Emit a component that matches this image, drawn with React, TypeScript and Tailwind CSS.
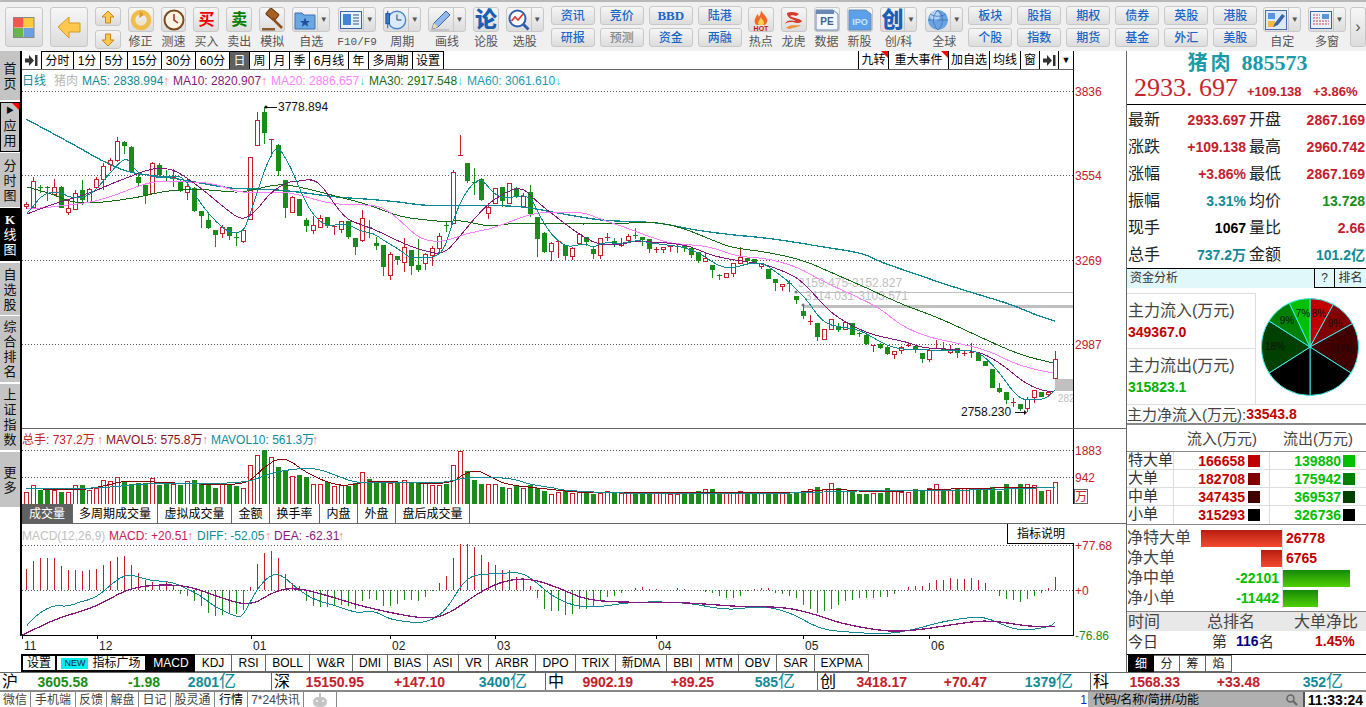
import { type FC, type ReactNode } from "react";

type Pt = number[];

const RED = "#c4202c";
const GREEN = "#1a8c1a";
const TEAL = "#128a96";
const PURPLE = "#86187e";
const PINK = "#ff80ff";
const DKGREEN = "#146c14";

// bodyTop, bodyBottom, wickTop, wickBottom, red(1)/green(0)
const candles: number[][] = [
  [204, 206, 202, 209, 1], [181, 207, 177, 209, 1], [187, 188, 185, 193, 0], [187, 188, 186, 201, 0], [187, 194, 179, 196, 1], [187, 208, 186, 208, 0],
  [208, 212, 199, 215, 1], [193, 209, 190, 209, 1], [190, 200, 180, 205, 0], [189, 202, 188, 203, 1], [179, 187, 177, 189, 1], [166, 179, 163, 190, 1],
  [160, 164, 158, 171, 1], [141, 160, 137, 162, 1], [142, 146, 141, 154, 0], [147, 172, 146, 172, 0], [177, 183, 173, 186, 0], [185, 195, 184, 204, 0],
  [163, 193, 162, 193, 1], [165, 175, 163, 178, 0], [176, 177, 170, 181, 0], [177, 178, 169, 187, 1], [181, 191, 179, 192, 0], [186, 192, 178, 200, 1],
  [188, 211, 187, 212, 0], [211, 216, 211, 228, 0], [220, 228, 213, 229, 0], [230, 235, 230, 247, 0], [227, 233, 225, 238, 1], [227, 236, 227, 240, 0],
  [237, 238, 233, 246, 0], [230, 241, 230, 243, 1], [157, 219, 157, 219, 1], [120, 145, 112, 145, 1], [112, 133, 107, 144, 0], [139, 140, 139, 157, 1],
  [145, 171, 144, 176, 0], [180, 208, 180, 218, 0], [197, 212, 196, 213, 1], [199, 216, 199, 216, 0], [220, 226, 218, 232, 0], [225, 230, 216, 234, 1],
  [218, 227, 215, 227, 1], [217, 226, 217, 228, 0], [226, 227, 226, 235, 1], [221, 229, 221, 233, 1], [221, 237, 221, 239, 0], [238, 247, 238, 255, 0],
  [218, 240, 210, 242, 1], [227, 228, 220, 238, 0], [243, 246, 237, 250, 0], [245, 267, 245, 276, 0], [254, 275, 252, 280, 1], [256, 260, 256, 265, 0],
  [247, 262, 238, 272, 1], [250, 266, 250, 275, 0], [265, 270, 239, 272, 0], [254, 263, 253, 270, 1], [248, 255, 246, 266, 1], [236, 248, 233, 252, 1],
  [225, 226, 222, 232, 0], [172, 223, 170, 223, 1], [155, 156, 135, 156, 1], [163, 181, 163, 183, 0], [182, 183, 168, 195, 0], [179, 200, 178, 201, 0],
  [207, 213, 203, 219, 1], [188, 203, 188, 203, 1], [187, 201, 187, 207, 0], [183, 203, 183, 203, 1], [188, 197, 187, 198, 0], [196, 206, 193, 207, 1],
  [192, 214, 185, 217, 0], [217, 239, 217, 257, 0], [233, 252, 232, 253, 0], [243, 251, 242, 261, 1], [241, 242, 241, 258, 1], [245, 256, 245, 261, 0],
  [248, 256, 247, 260, 1], [234, 243, 233, 244, 1], [237, 242, 237, 246, 0], [249, 254, 247, 259, 0], [238, 255, 238, 259, 1], [237, 238, 233, 241, 1],
  [241, 243, 238, 247, 0], [243, 245, 238, 247, 1], [236, 240, 234, 241, 1], [235, 236, 228, 239, 0], [237, 240, 237, 246, 0], [239, 249, 239, 253, 0],
  [249, 250, 247, 253, 1], [247, 249, 247, 253, 1], [246, 247, 245, 252, 1], [246, 247, 245, 253, 1], [246, 248, 245, 252, 0], [248, 255, 248, 258, 0],
  [252, 261, 252, 263, 0], [258, 261, 253, 262, 1], [265, 270, 265, 278, 0], [275, 276, 274, 280, 0], [273, 277, 273, 277, 1], [263, 273, 263, 277, 1],
  [257, 263, 247, 264, 1], [258, 261, 258, 264, 0], [259, 263, 259, 264, 0], [263, 266, 263, 269, 1], [269, 279, 269, 279, 0], [279, 283, 279, 291, 0],
  [284, 286, 284, 291, 1], [283, 284, 280, 292, 0], [296, 300, 296, 304, 0], [311, 316, 305, 319, 0], [321, 322, 315, 325, 1], [323, 337, 323, 341, 0],
  [329, 339, 329, 339, 1], [319, 329, 319, 329, 1], [327, 330, 323, 332, 0], [322, 329, 322, 329, 1], [323, 335, 323, 335, 0], [333, 334, 332, 337, 0],
  [335, 344, 335, 345, 0], [345, 346, 345, 352, 1], [344, 348, 343, 349, 0], [347, 354, 346, 355, 0], [351, 354, 351, 359, 1], [347, 350, 346, 354, 1],
  [345, 346, 343, 347, 1], [346, 349, 345, 353, 0], [353, 359, 353, 363, 0], [350, 359, 350, 362, 1], [348, 349, 340, 349, 1], [348, 350, 342, 351, 0],
  [349, 352, 345, 354, 1], [348, 353, 348, 358, 0], [353, 354, 350, 356, 1], [352, 353, 343, 358, 1], [353, 361, 353, 361, 0], [361, 366, 361, 366, 0],
  [369, 388, 369, 388, 0], [388, 392, 383, 393, 0], [392, 400, 392, 404, 0], [402, 403, 398, 407, 1], [404, 409, 404, 411, 0], [399, 408, 397, 412, 1],
  [390, 397, 390, 403, 1], [392, 397, 392, 397, 0], [392, 394, 392, 397, 1], [359, 378, 351, 378, 1],
];

const vols = [
  12.5, 20, 15, 17, 15, 13, 13, 20, 20, 15, 17, 26, 25, 29, 25, 22, 23, 23, 28, 20, 22, 22, 20, 25, 26, 21, 23, 17, 21, 20, 19, 17, 42, 53, 58, 51, 40, 36, 30, 31,
  29, 22, 21, 24, 19, 20, 19, 23, 34, 27, 24, 23, 23, 24, 26, 23, 23, 23, 20, 20, 21, 42, 57, 35, 26, 21, 21, 21, 18, 17, 19, 17, 20, 17, 14, 11, 13,
  14, 12, 13, 12, 11, 12, 14, 12, 12, 12, 13, 12, 11, 12, 13, 11, 11, 13, 12, 14, 16, 16, 13, 12, 12, 14.5, 13, 12, 12, 12, 12, 12, 11, 13, 14, 16, 18.5, 16, 22.5, 17,
  14.5, 14, 11, 11, 12, 12, 17, 14, 13, 13, 16, 14.5, 17, 21.5, 16, 15, 16, 17, 17, 16, 16, 18, 14, 21, 18, 21, 21.5, 20, 14.5, 15, 23.5,
];

const hist = [
  23, 31, 34, 34, 34, 26, 22, 22, 20, 22, 23, 27, 31, 35, 37, 27, 18, 11, 9, 6, 9, 5, -4, -6, -12, -17, -25, -28, -27, -26, -26, -22, 3, 28, 40, 42, 34, 17, 8, 4,
  -12, -17, -18, -18, -16, -16, -17, -20, -12, -10, -11, -17, -17, -15, -11, -11, -12, -7, -1, 8, 15, 34, 49, 49, 46, 38, 30, 27, 21, 21, 14, 13, 4, -9, -20, -23, -23,
  -27, -26, -20, -20, -17, -11, -7, -6, -3, -1, 2, 3, 1, 1, 0, 0, 2, 1, 0, 0, -2, -3, -6, -9, -9, -6, -1, 1, 2, 2, -3, -4, -6, -9, -16, -20, -25, -23, -20, -16,
  -12, -11, -9, -9, -9, -8, -7, -4, 0, 3, 4, 4, 7, 11, 11, 13, 12, 12, 13, 11, 8, 0, -6, -10, -11, -13, -10, -6, -3, 2, 14,
];

const ma5: Pt[] = [[27,213],[33,207],[40,197],[50,192],[63,193],[68,197],[80,198],[90,195],[100,185],[110,173],[120,162],[128,158],[137,173],[147,175],[160,178],[173,176],[182,177],[190,187],[203,207],[217,223],[230,233],[243,232],[248,220],[257,193],[267,163],[277,145],[287,160],[295,177],[303,197],[313,215],[327,227],[343,223],[353,227],[363,232],[373,233],[383,240],[400,250],[410,258],[427,258],[437,256],[445,248],[453,220],[463,197],[473,183],[482,179],[493,193],[503,198],[513,197],[530,195],[540,217],[553,237],[567,247],[577,245],[587,244],[593,248],[603,242],[620,244],[637,240],[650,243],[667,245],[683,247],[697,252],[707,258],[717,265],[727,268],[737,267],[750,263],[763,263],[773,270],[787,280],[797,290],[807,300],[823,323],[840,327],[860,330],[877,340],[893,348],[913,350],[947,350],[973,350],[985,357],[1000,373],[1013,392],[1023,400],[1037,400],[1047,398],[1055,390]];
const ma10: Pt[] = [[27,214],[50,205],[77,197],[93,192],[113,183],[137,174],[153,168],[173,169],[190,180],[207,193],[227,210],[243,221],[257,210],[270,193],[287,182],[300,181],[313,179],[323,187],[333,202],[347,220],[363,225],[380,232],[400,242],[420,250],[443,255],[457,240],[473,220],[490,202],[510,190],[523,188],[533,198],[547,210],[567,225],[583,237],[600,245],[620,245],[633,241],[650,242],[670,243],[690,246],[710,255],[733,260],[757,263],[773,267],[797,277],[813,293],[830,312],[847,323],[867,333],[887,338],[907,342],[923,348],[947,349],[973,351],[987,355],[1007,368],[1023,382],[1040,390],[1053,392]];
const ma20: Pt[] = [[27,209],[43,208],[67,205],[87,203],[107,198],[123,192],[147,183],[163,181],[187,182],[213,183],[240,193],[267,192],[287,192],[307,197],[327,203],[350,205],[380,205],[400,220],[417,237],[433,242],[450,240],[467,233],[487,230],[507,223],[530,214],[550,212],[583,212],[600,219],[627,228],[653,238],[673,244],[710,246],[737,257],[767,258],[800,268],[820,280],[853,295],[880,308],[900,325],[927,337],[957,343],[987,350],[1013,363],[1037,370],[1053,373]];
const ma30: Pt[] = [[27,187],[50,193],[73,203],[97,203],[120,200],[140,197],[160,192],[187,189],[213,190],[240,193],[260,188],[280,184],[300,187],[320,192],[343,198],[370,205],[400,217],[427,220],[447,222],[460,220],[490,227],[513,223],[540,223],[567,224],[600,224],[630,223],[657,222],[683,228],[717,242],[733,248],[767,252],[803,260],[830,272],[867,288],[903,305],[937,317],[980,337],[1020,355],[1053,363]];
const ma60: Pt[] = [[26,119],[50,132],[80,148],[100,160],[127,172],[147,175],[173,178],[200,183],[233,189],[267,189],[300,192],[333,197],[367,199],[400,202],[427,206],[467,205],[520,206],[547,211],[580,217],[607,221],[657,222],[693,230],[733,235],[767,238],[800,243],[823,247],[863,253],[880,262],[913,273],[947,285],[980,295],[1013,305],[1033,314],[1055,321]];

// low pane curves, read off the crops: left half and right half have different x scale
const z11 = (pts: Pt[]): Pt[] => pts.map(([x, y]) => [x / 2.8, y / 3 + 425]);
const z12 = (pts: Pt[]): Pt[] => pts.map(([x, y]) => [x / 2.75 + 560, y / 3 + 425]);

const mavol5 = [
  ...z11([[73,190],[140,193],[220,195],[270,188],[320,175],[360,167],[500,175],[650,180],[700,170],[740,125],[780,100],[810,105],[860,145],[930,178],[980,182],[1020,170],[1100,170],[1130,172],[1260,178],[1300,145],[1340,135],[1380,160],[1420,180],[1560,195]]),
  ...z12([[0,197],[100,205],[400,200],[650,205],[750,190],[860,203],[1100,190],[1280,188],[1362,187]]),
];
const mavol10 = [
  ...z11([[73,190],[260,193],[420,173],[680,177],[750,148],[800,135],[880,127],[950,155],[1000,175],[1100,172],[1240,175],[1300,157],[1430,158],[1480,178],[1560,190]]),
  ...z12([[0,195],[150,205],[400,205],[650,205],[800,197],[1100,197],[1362,187]]),
];
const diff = [
  ...z11([[75,602],[100,570],[150,540],[190,545],[220,532],[270,518],[320,470],[350,450],[380,452],[420,467],[480,470],[520,490],[560,510],[600,545],[660,575],[680,575],[720,490],[760,447],[790,450],[830,490],[880,525],[950,545],[1000,565],[1030,558],[1060,563],[1090,583],[1170,595],[1210,585],[1250,555],[1300,465],[1340,447],[1400,447],[1450,440],[1490,460],[1530,500],[1568,525]]),
  ...z12([[40,543],[90,547],[130,542],[210,530],[350,532],[460,557],[550,542],[630,560],[710,610],[770,620],[900,628],[980,612],[1050,590],[1140,575],[1180,580],[1260,620],[1350,605],[1362,590]]),
];
const dea = [
  ...z11([[60,632],[120,600],[170,577],[270,545],[350,495],[420,480],[520,480],[610,515],[700,545],[770,497],[830,488],[920,512],[1000,540],[1100,565],[1200,583],[1260,565],[1330,510],[1400,470],[1480,458],[1568,490]]),
  ...z12([[60,520],[140,532],[350,532],[480,545],[600,545],[680,560],[770,595],[860,613],[920,620],[1000,613],[1100,595],[1180,585],[1300,606],[1362,604]]),
];

const smooth = (pts: Pt[]) => {
  let d = `M${pts[0][0]} ${pts[0][1]}`;
  for (let i = 1; i < pts.length - 1; i++) {
    const mx = (pts[i][0] + pts[i + 1][0]) / 2;
    const my = (pts[i][1] + pts[i + 1][1]) / 2;
    d += ` Q${pts[i][0]} ${pts[i][1]} ${mx} ${my}`;
  }
  const last = pts[pts.length - 1];
  return `${d} L${last[0]} ${last[1]}`;
};

const Curve: FC<{ pts: Pt[]; color: string; w?: number }> = ({ pts, color, w = 1 }) => (
  <path d={smooth(pts)} fill="none" stroke={color} strokeWidth={w} shapeRendering="crispEdges" />
);

const Dots: FC<{ y: number }> = ({ y }) => (
  <line x1={22} x2={1073} y1={y + 0.5} y2={y + 0.5} stroke="#555" strokeDasharray="1 2" shapeRendering="crispEdges" />
);

const T: FC<{ x: number; y: number; fill: string; size?: number; children: ReactNode }> = ({ x, y, fill, size = 12, children }) => (
  <text x={x} y={y} fill={fill} fontSize={size}>
    {children}
  </text>
);

const MainChart = () => (
  <svg className="block h-[359px] w-[1104px]" viewBox="22 70 1104 359">
    <T x={22} y={85} fill={TEAL}>日线</T>
    <T x={54} y={85} fill="#b8b8b8">猪肉</T>
    <T x={82} y={85} fill={TEAL}>MA5: 2838.994</T>
    <T x={163} y={85} fill="#ff7070">↑</T>
    <T x={173} y={85} fill={PURPLE}>MA10: 2820.907</T>
    <T x={261} y={85} fill="#ff7070">↑</T>
    <T x={271} y={85} fill={PINK}>MA20: 2886.657</T>
    <T x={359} y={85} fill="#30d0f0">↓</T>
    <T x={369} y={85} fill={DKGREEN}>MA30: 2917.548</T>
    <T x={457} y={85} fill="#30d0f0">↓</T>
    <T x={467} y={85} fill="#1a9ab8">MA60: 3061.610</T>
    <T x={555} y={85} fill="#30d0f0">↓</T>
    {[91, 175, 260, 344].map((y) => (
      <Dots key={y} y={y} />
    ))}
    <line x1={796} x2={1073} y1={292.5} y2={292.5} stroke="#c0c0c0" />
    <rect x={803} y={305} width={270} height={3} fill="#c0c0c0" />
    <rect x={1055} y={379} width={18} height={12} fill="#c0c0c0" />
    <T x={798} y={287} fill="#c0c0c0">3159.475-3152.827</T>
    <T x={805} y={300} fill="#c0c0c0">3114.031-3103.571</T>
    <T x={1058} y={402} fill="#c0c0c0" size={10}>282</T>
    <circle cx={796} cy={292} r={1.5} fill="#777" />
    <circle cx={803} cy={305} r={1.5} fill="#777" />
    <g shapeRendering="crispEdges">
      {candles.map(([top, bot, hi, lo, up], i) => {
        const x = 26 + 7 * i;
        const c = up ? RED : GREEN;
        return (
          <g key={i}>
            <line x1={x + 0.5} x2={x + 0.5} y1={hi} y2={lo} stroke={c} />
            {bot - top < 2 ? (
              <rect x={x - 2} y={top} width={5} height={1} fill={c} />
            ) : up ? (
              <rect x={x - 1.5} y={top + 0.5} width={4} height={bot - top} fill="#fff" stroke={c} />
            ) : (
              <rect x={x - 2} y={top} width={5} height={bot - top} fill={c} />
            )}
          </g>
        );
      })}
    </g>
    <Curve pts={ma60} color={TEAL} w={1.3} />
    <Curve pts={ma30} color={DKGREEN} />
    <Curve pts={ma20} color={PINK} />
    <Curve pts={ma10} color={PURPLE} />
    <Curve pts={ma5} color={TEAL} />
    <circle cx={266} cy={107} r={1.5} fill="#111" />
    <line x1={266} x2={277} y1={107.5} y2={107.5} stroke="#111" />
    <T x={278} y={111} fill="#111">3778.894</T>
    <T x={961} y={416} fill="#111">2758.230</T>
    <line x1={1015} x2={1026} y1={412.5} y2={412.5} stroke="#111" />
    <path d="M1024 410 L1027 412.5 L1024 415 Z" fill="#111" />
    <line x1={1073.5} x2={1073.5} y1={70} y2={429} stroke="#000" shapeRendering="crispEdges" />
    <line x1={22} x2={1126} y1={429} y2={429} stroke="#666" strokeWidth={2} shapeRendering="crispEdges" />
    {[["3836", 96], ["3554", 180], ["3269", 265], ["2987", 349]].map(([t, y]) => (
      <T key={t} x={1075} y={Number(y)} fill={RED}>{t}</T>
    ))}
  </svg>
);

const VolumeChart = () => (
  <svg className="block h-[75px] w-[1104px]" viewBox="22 429 1104 75">
    <T x={22} y={444} fill={RED}>总手: 737.2万</T>
    <T x={97} y={444} fill="#ff7070">↑</T>
    <T x={106} y={444} fill="#8b1020">MAVOL5: 575.8万</T>
    <T x={202} y={444} fill="#ff7070">↑</T>
    <T x={211} y={444} fill={TEAL}>MAVOL10: 561.3万</T>
    <T x={312} y={444} fill="#ff7070">↑</T>
    <Dots y={450} />
    <Dots y={477} />
    <g shapeRendering="crispEdges">
      {vols.map((v, i) => {
        const x = 26 + 7 * i;
        const h = Math.round(v * 0.93);
        return candles[i][4] ? (
          <rect key={i} x={x - 1.5} y={504.5 - h} width={4} height={h} fill="#fff" stroke={RED} />
        ) : (
          <rect key={i} x={x - 2} y={504 - h} width={5} height={h} fill={GREEN} />
        );
      })}
    </g>
    <Curve pts={mavol5} color="#8b0000" />
    <Curve pts={mavol10} color={TEAL} />
    <line x1={1073.5} x2={1073.5} y1={429} y2={504} stroke="#000" shapeRendering="crispEdges" />
    <T x={1075} y={455} fill={RED}>1883</T>
    <T x={1075} y={482} fill={RED}>942</T>
    <rect x={1074.5} y={489.5} width={13} height={14} fill="#fff" stroke="#666" />
    <T x={1075} y={501} fill={RED}>万</T>
  </svg>
);

const MacdChart = () => (
  <svg className="block h-[112px] w-[1104px] overflow-visible" viewBox="22 524 1104 112">
    <T x={22} y={540} fill="#c0c0c0">MACD(12,26,9)</T>
    <T x={109} y={540} fill="#c8205a">MACD: +20.51</T>
    <T x={187} y={540} fill="#ff7070">↑</T>
    <T x={197} y={540} fill={TEAL}>DIFF: -52.05</T>
    <T x={265} y={540} fill="#ff7070">↑</T>
    <T x={274} y={540} fill={PURPLE}>DEA: -62.31</T>
    <T x={338} y={540} fill="#ff7070">↑</T>
    <Dots y={545} />
    <Dots y={590} />
    <g shapeRendering="crispEdges">
      {hist.map((v, i) => {
        const x = 26 + 7 * i + 0.5;
        const h = v * 0.93;
        return v === 0 ? null : <line key={i} x1={x} x2={x} y1={590} y2={590 - h} stroke={v > 0 ? RED : GREEN} />;
      })}
    </g>
    <Curve pts={diff} color={TEAL} />
    <Curve pts={dea} color={PURPLE} w={1.3} />
    <line x1={1073.5} x2={1073.5} y1={524} y2={636} stroke="#000" shapeRendering="crispEdges" />
    <line x1={22} x2={1073} y1={635.5} y2={635.5} stroke="#000" shapeRendering="crispEdges" />
    <T x={1075} y={550} fill={RED}>+77.68</T>
    <T x={1075} y={595} fill={RED}>+0</T>
    <T x={1075} y={640} fill={GREEN}>-76.86</T>
  </svg>
);

const Cell: FC<{ w: string; active?: boolean; corner?: boolean; children: ReactNode; tone?: string }> = ({ w, active, corner, children, tone }) => (
  <div
    className={`relative flex h-full items-center justify-center border-r whitespace-nowrap ${tone ?? "border-black"} ${w} ${active ? "bg-[#606060] text-white" : "text-black"}`}
  >
    {children}
    {corner && <div className="absolute top-0 right-0 h-0 w-0 border-t-[7px] border-l-[7px] border-t-[#ff0000] border-l-transparent" />}
  </div>
);

const SkipIcon = () => (
  <svg width="13" height="11" viewBox="0 0 13 11" fill="#333">
    <path d="M0 3.5h4V0l5 5.5-5 5.5V7.5H0z" />
    <rect x="10" y="0" width="2.5" height="11" />
  </svg>
);

const periods = [
  ["分时", "w-[32px]"], ["1分", "w-[27px]"], ["5分", "w-[27px]"], ["15分", "w-[34px]"], ["30分", "w-[34px]"], ["60分", "w-[34px]"],
  ["日", "w-[20px]"], ["周", "w-[20px]"], ["月", "w-[20px]"], ["季", "w-[20px]"], ["6月线", "w-[39px]"], ["年", "w-[20px]"], ["多周期", "w-[44px]"], ["设置", "w-[31px]"],
];

const PeriodTabs = () => (
  <div className="flex h-[19px] w-[1052px] justify-between border-r border-b border-r-black border-b-[#666] text-[12px] leading-none">
    <div className="flex">
      <div className="flex w-[19px] items-center justify-center">
        <SkipIcon />
      </div>
      <div className="flex border-t border-l border-black">
        {periods.map(([label, w]) => (
          <Cell key={label} w={w} active={label === "日"}>{label}</Cell>
        ))}
      </div>
    </div>
    <div className="flex border-l border-black">
      <Cell w="w-[30px]" corner>九转</Cell>
      <Cell w="w-[60px]" corner>重大事件</Cell>
      <Cell w="w-[41px]">加自选</Cell>
      <Cell w="w-[31px]">均线</Cell>
      <Cell w="w-[19px]">窗</Cell>
      <Cell w="w-[19px]"><SkipIcon /></Cell>
      <div className="flex w-[14px] items-center justify-center text-[9px]">▼</div>
    </div>
  </div>
);

const volTabs = [
  ["成交量", "w-[51px]"], ["多周期成交量", "w-[85px]"], ["虚拟成交量", "w-[74px]"], ["金额", "w-[38px]"],
  ["换手率", "w-[50px]"], ["内盘", "w-[38px]"], ["外盘", "w-[38px]"], ["盘后成交量", "w-[74px]"],
];

const VolumeTabs = () => (
  <div className="flex h-[20px] w-[1104px] border-b border-[#666] text-[12px] leading-none">
    {volTabs.map(([label, w]) => (
      <Cell key={label} w={w} tone="border-[#666]" active={label === "成交量"}>{label}</Cell>
    ))}
  </div>
);

const ticks = [
  ["11", "w-[75px]"], ["12", "w-[154px]"], ["01", "w-[139px]"], ["02", "w-[105px]"], ["03", "w-[161px]"], ["04", "w-[147px]"], ["05", "w-[126px]"], ["06", "w-[100px]"],
];

const TimeAxis = () => (
  <div className="flex h-[18px] pl-[2px] text-[12px] leading-none">
    {ticks.map(([label, w]) => (
      <div key={label} className={`h-full ${w}`}>
        <div className="h-[3px] w-px bg-black" />
        <div className="pt-[1px] pl-[2px] text-[#222]">{label}</div>
      </div>
    ))}
  </div>
);

const indicators = [
  ["KDJ", "w-[37px]"], ["RSI", "w-[34px]"], ["BOLL", "w-[44px]"], ["W&R", "w-[43px]"], ["DMI", "w-[35px]"], ["BIAS", "w-[40px]"], ["ASI", "w-[31px]"], ["VR", "w-[30px]"],
  ["ARBR", "w-[47px]"], ["DPO", "w-[40px]"], ["TRIX", "w-[40px]"], ["新DMA", "w-[51px]"], ["BBI", "w-[33px]"], ["MTM", "w-[39px]"], ["OBV", "w-[38px]"], ["SAR", "w-[38px]"], ["EXPMA", "w-[54px]"],
];

const IndicatorTabs = () => (
  <div className="flex h-[18px] pl-px text-[12px] leading-none">
    <div className="flex w-[36px] items-center justify-center border-2 border-black">设置</div>
    <div className="flex w-[90px] items-center justify-center gap-1 border-2 border-l-0 border-black">
      <span className="bg-[#00f0f0] px-[3px] text-[9px] leading-[11px] text-[#223]">NEW</span>
      指标广场
    </div>
    <div className="flex w-[48px] items-center justify-center bg-black text-white">MACD</div>
    <div className="flex border-y border-[#666]">
      {indicators.map(([label, w]) => (
        <Cell key={label} w={w} tone="border-[#666]">{label}</Cell>
      ))}
    </div>
  </div>
);

const navItems = [
  { chars: ["首", "页"], h: "h-[49px]", gap: "mb-[2px]" },
  { chars: ["应", "用"], h: "h-[50px]", gap: "mb-px", app: true },
  { chars: ["分", "时", "图"], h: "h-[54px]", gap: "mb-px" },
  { chars: ["K", "线", "图"], h: "h-[53px]", gap: "mb-[2px]", on: true },
  { chars: ["自", "选", "股"], h: "h-[52px]", gap: "mb-px" },
  { chars: ["综", "合", "排", "名"], h: "h-[66px]", gap: "mb-[2px]" },
  { chars: ["上", "证", "指", "数"], h: "h-[66px]", gap: "mb-[2px]" },
  { chars: ["更", "多"], h: "h-[55px]", gap: "" },
];

const LeftNav = () => (
  <div className="w-[20px] shrink-0 text-[13px] leading-[15px]">
    {navItems.map((n) => (
      <div
        key={n.chars.join("")}
        className={`relative flex flex-col items-center justify-center ${n.h} ${n.gap} ${n.on ? "bg-black text-white" : "bg-[#c4c4c4] text-[#111]"} ${n.app ? "border border-black" : ""}`}
      >
        {n.app && (
          <>
            <div className="absolute top-0 right-0 h-0 w-0 border-t-[7px] border-l-[7px] border-t-[#ff0000] border-l-transparent" />
            <div className="mb-[3px] text-[8px] leading-[9px]">▶</div>
          </>
        )}
        {n.chars.map((c) => (
          <span key={c} className={c === "K" ? "font-bold [font-family:'Liberation_Serif',serif]" : ""}>{c}</span>
        ))}
      </div>
    ))}
  </div>
);

// toolbar drawings
const LogoIcon = () => (
  <svg width="22" height="21" viewBox="0 0 22 21">
    <rect x="0.5" y="0.5" width="10" height="10" fill="#f2564c" />
    <rect x="11" y="0.5" width="10" height="10" fill="#fbc93c" />
    <rect x="0.5" y="11" width="10" height="9.5" fill="#68b548" />
    <rect x="11" y="11" width="10" height="9.5" fill="#6f9ee0" />
    <rect x="0.5" y="0.5" width="20.5" height="20" fill="none" stroke="#888" />
  </svg>
);

const BackIcon = () => (
  <svg width="24" height="24" viewBox="0 0 24 24">
    <path d="M1 12 12 2v6h11v9H12v6z" fill="#fdc84e" stroke="#d69a26" />
  </svg>
);

const VArrow: FC<{ down?: boolean }> = ({ down }) => (
  <svg width="14" height="14" viewBox="0 0 14 14">
    <path d={down ? "M7 13 1 7h3.5V1h5v6H13z" : "M7 1 1 7h3.5v6h5V7H13z"} fill="#fdc84e" stroke="#c8871e" />
  </svg>
);

const RefreshIcon = () => (
  <svg width="22" height="22" viewBox="0 0 22 22">
    <circle cx="11" cy="11" r="8" fill="none" stroke="#f0bc4c" strokeWidth="4.5" />
    <path d="M10 2 14 6 9 9z" fill="#d99a2c" />
    <path d="M7 12a4 4 0 0 0 7 1" fill="none" stroke="#fbe6a6" strokeWidth="1.5" />
  </svg>
);

const ClockIcon = () => (
  <svg width="22" height="22" viewBox="0 0 22 22">
    <circle cx="11" cy="11" r="9.5" fill="#fbf4e0" stroke="#7c4a20" strokeWidth="2" />
    <path d="M11 5v6l4 3" fill="none" stroke="#a02c20" strokeWidth="1.5" />
  </svg>
);

const HammerIcon = () => (
  <svg width="24" height="24" viewBox="0 0 24 24">
    <rect x="7" y="2" width="11" height="8" rx="1" transform="rotate(40 12 6)" fill="#a85f22" stroke="#6d3a12" />
    <path d="M12 10 22 20" stroke="#8c4c1c" strokeWidth="2.5" />
    <rect x="2" y="20" width="13" height="2.5" fill="#8c5a2c" />
  </svg>
);

const FolderIcon = () => (
  <svg width="22" height="20" viewBox="0 0 22 20">
    <path d="M1 3h7l2 2h11v14H1z" fill="#6aa8e4" stroke="#3e72b4" />
    <path d="M11 7.5 12.4 11H16l-2.8 2.2 1 3.5L11 14.6l-3.2 2.1 1-3.5L6 11h3.6z" fill="#1f4f9c" />
  </svg>
);

const InfoIcon = () => (
  <svg width="22" height="18" viewBox="0 0 22 18">
    <rect x="0.5" y="0.5" width="21" height="17" fill="#e8f0fb" stroke="#3a66a8" />
    <rect x="3" y="3" width="8" height="11" fill="#3f84d8" />
    <path d="M13 4h6M13 7h6M13 10h6M13 13h6" stroke="#35598c" />
  </svg>
);

const PeriodIcon = () => (
  <svg width="26" height="22" viewBox="0 0 26 22">
    <circle cx="14" cy="11" r="9.5" fill="#dbeafa" stroke="#4a86cc" strokeWidth="1.5" />
    <path d="M14 5v6h5" fill="none" stroke="#333" />
    <rect x="2" y="4" width="4" height="11" fill="#3a78c8" stroke="#1f4f9c" />
    <path d="M4 1v3M4 15v5" stroke="#1f4f9c" />
  </svg>
);

const PencilIcon = () => (
  <svg width="22" height="22" viewBox="0 0 22 22">
    <path d="M2 20 4 14 16 2l4 4L8 18z" fill="#8fb8ec" stroke="#3a66a8" />
    <path d="M2 20 4 14l4 4z" fill="#f4d9a8" />
    <path d="M1 21h18" stroke="#bbb" strokeWidth="1.5" />
  </svg>
);

const SearchChartIcon = () => (
  <svg width="22" height="22" viewBox="0 0 22 22">
    <circle cx="9.5" cy="9.5" r="8" fill="#fff" stroke="#2d5fae" strokeWidth="2" />
    <path d="M3.5 12 7 8l3 3 5-6" fill="none" stroke="#e0342c" strokeWidth="1.6" />
    <path d="M15 15l5.5 5.5" stroke="#2d5fae" strokeWidth="3" />
  </svg>
);

const FireIcon = () => (
  <svg width="20" height="22" viewBox="0 0 20 22">
    <path d="M10 1c1 4 5 5 6 9 1 3-1 5-2 6H6c-2-1-3-3-2-6 .5-2 2-3 2-5 1 1 2 2 2 3 1-2 2-4 2-7z" fill="#f0682c" />
    <path d="M10 8c0 2 3 3 3 6 0 1-1 2-1 2H8s-1-1-1-2c0-2 2-3 3-6z" fill="#fbd04c" />
    <text x="10" y="21.5" textAnchor="middle" fontSize="7" fontWeight="700" fill="#cc1010">HOT</text>
  </svg>
);

const DragonIcon = () => (
  <svg width="22" height="22" viewBox="0 0 22 22" fill="none">
    <path d="M4 4c4-2 9-1 12 1l-3 2c-2-1-5-1-6 0 3 2 9 2 12 5-2 3-6 2-9 1-3 0-6 0-8 2 2-5 7-3 11-3-4-2-9-3-9-8z" fill="#d63a2a" />
    <path d="M3 19c4-4 10-2 15-3-3 3-9 2-11 4z" fill="#f09030" />
  </svg>
);

const DocIcon: FC<{ label: string; dark?: boolean }> = ({ label, dark }) => (
  <svg width="24" height="22" viewBox="0 0 24 22">
    <path d="M1 1h17l5 4v16H1z" fill={dark ? "#5aa0ea" : "#f4f8fd"} stroke="#6a8ab4" />
    {!dark && <rect x="1" y="1" width="18" height="4" fill="#6a8ab4" />}
    <text x="12" y="16" textAnchor="middle" fontSize={dark ? 9 : 10} fontWeight="700" fill={dark ? "#cfe4ff" : "#44608c"}>{label}</text>
  </svg>
);

const GlobeIcon = () => (
  <svg width="22" height="22" viewBox="0 0 22 22" fill="none">
    <circle cx="11" cy="11" r="10" fill="#6aa2e2" />
    <circle cx="8" cy="7" r="5" fill="#b4d2f4" />
    <path d="M1 11h20M11 1c-6 5-6 15 0 20M11 1c6 5 6 15 0 20M3 5c5 3 11 3 16 0" stroke="#3f74bc" strokeWidth=".8" />
  </svg>
);

const CustomIcon = () => (
  <svg width="22" height="20" viewBox="0 0 22 20">
    <rect x="0.5" y="0.5" width="21" height="19" fill="#dbe8f8" stroke="#4a6ea8" />
    <rect x="3" y="3" width="7" height="6" fill="#5a94dc" />
    <rect x="3" y="11" width="7" height="6" fill="#f2b84c" />
    <path d="M8 17 10 13 17 4l3 2-7 9z" fill="#3a66a8" />
  </svg>
);

const WindowsIcon = () => (
  <svg width="22" height="18" viewBox="0 0 22 18">
    <rect x="0.5" y="0.5" width="21" height="17" fill="#e8f0fb" stroke="#3a66a8" />
    <path d="M3 4h7M3 7h7M3 10h16M3 13h16" stroke="#d04040" strokeDasharray="2 1" />
    <rect x="12" y="3" width="7" height="5" fill="#5a94dc" />
  </svg>
);

const BigGlyph: FC<{ children: ReactNode }> = ({ children }) => <span className="text-[22px] leading-none font-black text-[#1a5fb4]">{children}</span>;

const btnFace = "rounded-[3px] border border-[#c8c8c8] bg-gradient-to-b from-[#f6f6f6] to-[#dcdcdc]";

const Tool: FC<{ label: string; icon: ReactNode; split?: boolean; className?: string; labelClass?: string }> = ({ label, icon, split, className, labelClass }) => (
  <div className={`flex flex-col items-center ${split ? "w-[38px]" : "w-[26px]"} ${className ?? ""}`}>
    <div className={`mt-[7px] flex h-[25px] w-full items-center ${btnFace}`}>
      <div className="flex h-full min-w-0 flex-1 items-center justify-center overflow-hidden">{icon}</div>
      {split && <div className="flex h-full w-[12px] items-center justify-center border-l border-[#c8c8c8] text-[8px] text-[#555]">▼</div>}
    </div>
    <div className={`mt-[2px] leading-[16px] whitespace-nowrap text-[#555] ${labelClass ?? "text-[12px]"}`}>{label}</div>
  </div>
);

const TextBtn: FC<{ top: string; bottom: string; mutedBottom?: boolean }> = ({ top, bottom, mutedBottom }) => (
  <div className="mt-[6px] flex w-[44px] flex-col gap-[3px] text-[12px] leading-none font-medium text-[#1a66c8]">
    <div className={`flex h-[19px] items-center justify-center ${btnFace} ${top === "BBD" ? "text-[13px] font-bold [font-family:'Liberation_Serif',serif]" : ""}`}>{top}</div>
    <div className={`flex h-[19px] items-center justify-center ${btnFace} ${mutedBottom ? "text-[#888]" : ""}`}>{bottom}</div>
  </div>
);

const Toolbar = () => (
  <div className="flex h-[51px] shrink-0 items-start gap-[7px] border-t-2 border-[#b8b8b8] bg-[#f0f0f0] pl-[5px] [&>*]:-translate-y-[2px]">
    <div className={`mt-[7px] flex h-[40px] w-[38px] items-center justify-center ${btnFace}`}><LogoIcon /></div>
    <div className={`mt-[7px] flex h-[40px] w-[38px] items-center justify-center ${btnFace}`}><BackIcon /></div>
    <div className="mt-[7px] flex w-[26px] flex-col gap-[4px]">
      <div className={`flex h-[19px] items-center justify-center ${btnFace}`}><VArrow /></div>
      <div className={`flex h-[19px] items-center justify-center ${btnFace}`}><VArrow down /></div>
    </div>
    <Tool label="修正" icon={<RefreshIcon />} />
    <Tool label="测速" icon={<ClockIcon />} />
    <Tool label="买入" icon={<span className="text-[16px] leading-none font-bold text-[#f00000]">买</span>} />
    <Tool label="卖出" icon={<span className="text-[16px] leading-none font-bold text-[#008000]">卖</span>} />
    <Tool label="模拟" icon={<HammerIcon />} />
    <Tool label="自选" split icon={<FolderIcon />} />
    <Tool label="F10/F9" split icon={<InfoIcon />} className="ml-px" labelClass="text-[11px] [font-family:'Liberation_Mono',monospace]" />
    <Tool label="周期" split icon={<PeriodIcon />} />
    <Tool label="画线" split icon={<PencilIcon />} />
    <Tool label="论股" icon={<BigGlyph>论</BigGlyph>} />
    <Tool label="选股" split icon={<SearchChartIcon />} />
    <div className="flex gap-[5px]">
      <TextBtn top="资讯" bottom="研报" />
      <TextBtn top="竞价" bottom="预测" mutedBottom />
      <TextBtn top="BBD" bottom="资金" />
      <TextBtn top="陆港" bottom="两融" />
    </div>
    <Tool label="热点" icon={<FireIcon />} className="-ml-px" />
    <Tool label="龙虎" icon={<DragonIcon />} />
    <Tool label="数据" icon={<DocIcon label="PE" />} />
    <Tool label="新股" icon={<DocIcon label="IPO" dark />} />
    <Tool label="创/科" split icon={<BigGlyph>创</BigGlyph>} />
    <Tool label="全球" split icon={<GlobeIcon />} className="ml-px" />
    <div className="-ml-[2px] flex gap-[5px]">
      <TextBtn top="板块" bottom="个股" />
      <TextBtn top="股指" bottom="指数" />
      <TextBtn top="期权" bottom="期货" />
      <TextBtn top="债券" bottom="基金" />
      <TextBtn top="英股" bottom="外汇" />
      <TextBtn top="港股" bottom="美股" />
    </div>
    <Tool label="自定" split icon={<CustomIcon />} className="-ml-px" />
    <Tool label="多窗" split icon={<WindowsIcon />} />
    <div className={`-ml-[3px] mt-[7px] flex h-[40px] w-[16px] items-center justify-center text-[16px] text-[#555] ${btnFace}`}>›</div>
  </div>
);

const quote = [
  ["最新", "2933.697", RED, "开盘", "2867.169", RED],
  ["涨跌", "+109.138", RED, "最高", "2960.742", RED],
  ["涨幅", "+3.86%", RED, "最低", "2867.169", RED],
  ["振幅", "3.31%", TEAL, "均价", "13.728", GREEN],
  ["现手", "1067", "#000", "量比", "2.66", RED],
  ["总手", "737.2万", TEAL, "金额", "101.2亿", TEAL],
];

const slices = [
  [8, "#c00000", "8%", 63, 25], [9, "#800000", "9%", 79, 35], [17, "#400000", "17%", 88, 61], [16, "#000000", "", 0, 0],
  [16, "#000000", "", 0, 0], [18, "#004000", "18%", 19, 58], [9, "#008000", "9%", 31, 32], [7, "#00c000", "7%", 47, 25],
] as const;

const Pie = () => {
  const cx = 54;
  const cy = 59;
  const r = 48.5;
  let acc = 0;
  return (
    <svg width="110" height="116" viewBox="0 0 110 116">
      {slices.map(([pct, color], i) => {
        const a0 = (acc / 100) * 2 * Math.PI;
        acc += pct;
        const a1 = (acc / 100) * 2 * Math.PI;
        const d = `M${cx} ${cy} L${cx + r * Math.sin(a0)} ${cy - r * Math.cos(a0)} A${r} ${r} 0 0 1 ${cx + r * Math.sin(a1)} ${cy - r * Math.cos(a1)} Z`;
        return <path key={i} d={d} fill={color} stroke="#40e8e8" strokeWidth="1" />;
      })}
      {slices.map(([, , label, x, y]) =>
        label ? (
          <text key={`${label}${x}`} x={x} y={y + 4} textAnchor="middle" fontSize="10" fill="#111">
            {label}
          </text>
        ) : null,
      )}
    </svg>
  );
};

const orders = [
  ["特大单", "166658", "#c00000", "139880", "#00c000"],
  ["大单", "182708", "#800000", "175942", "#008000"],
  ["中单", "347435", "#400000", "369537", "#004000"],
  ["小单", "315293", "#000000", "326736", "#000000"],
];

const RightPanel = () => (
  <div className="flex w-[240px] shrink-0 flex-col border-l border-[#666] text-[16px] leading-none text-[#222]">
    <div className="h-[54px] border-b border-black">
      <div className="flex h-[23px] items-center justify-center gap-2 pl-[2px] text-[22px] font-bold text-[#1a9aa8] [font-family:'Liberation_Serif','Noto_Sans_CJK_SC',serif]">
        <span className="text-[20px] tracking-[3px]">猪肉</span>
        <span>885573</span>
      </div>
      <div className="flex items-baseline pl-[7px] leading-[28px]">
        <span className="w-[113px] text-[26px] text-[#c8232c] [font-family:'Liberation_Serif',serif]">2933. 697</span>
        <span className="w-[66px] text-[13px] font-bold text-[#c4202c]">+109.138</span>
        <span className="text-[13px] font-bold text-[#c4202c]">+3.86%</span>
      </div>
    </div>
    <div className="h-[164px] border-b border-black pt-px">
      {quote.map(([a, b, bc, c, d, dc]) => (
        <div key={a} className="flex h-[27px] items-center pl-px whitespace-nowrap">
          <span className="w-[32px] shrink-0">{a}</span>
          <span className="w-[86px] shrink-0 text-right text-[14px] font-bold" style={{ color: bc }}>{b}</span>
          <span className="ml-[3px] w-[32px] shrink-0">{c}</span>
          <span className="w-[84px] shrink-0 text-right text-[14px] font-bold" style={{ color: dc }}>{d}</span>
        </div>
      ))}
    </div>
    <div className="flex h-[19px] bg-[#e0f8fa] text-[12px] text-[#333]">
      <span className="flex-1 pl-[3px] leading-[18px]">资金分析</span>
      <span className="flex w-[21px] items-center justify-center border-x border-b border-black">?</span>
      <span className="flex w-[31px] items-center justify-center border-b border-black">排名</span>
    </div>
    <div className="flex h-[116px]">
      <div className="mt-[5px] h-[111px] w-[129px] border-t border-r border-[#ddd] text-[16px] whitespace-nowrap text-[#444]">
        <div className="h-[55px] border-b border-[#ddd] pl-px">
          <div className="pt-[9px]">主力流入(万元)</div>
          <div className="pt-[6px] text-[14px] font-bold text-[#c00000]">349367.0</div>
        </div>
        <div className="pl-px">
          <div className="pt-[9px]">主力流出(万元)</div>
          <div className="pt-[6px] text-[14px] font-bold text-[#00b000]">315823.1</div>
        </div>
      </div>
      <Pie />
    </div>
    <div className="flex h-[21px] items-center border-t border-b-2 border-t-[#ddd] border-b-[#888] text-[15px] whitespace-nowrap text-[#444]">
      主力净流入(万元):<span className="text-[14px] font-bold text-[#c00000]">33543.8</span>
    </div>
    <div className="flex h-[26px] items-center text-[15px] text-[#444]">
      <span className="ml-[60px] w-[96px]">流入(万元)</span>
      <span>流出(万元)</span>
    </div>
    <div className="h-[74px] border-y border-[#888] text-[15px]">
      {orders.map(([l, a, ac, b, bc]) => (
        <div key={l} className="flex h-[18px] items-center border-b border-[#ddd] last:border-b-0">
          <span className="h-full w-[47px] border-r border-[#ddd] pl-px text-[#333]">{l}</span>
          <span className="w-[71px] text-right text-[14px] font-bold text-[#c00000]">{a}</span>
          <span className="mr-[9px] ml-[3px] h-[12px] w-[12px]" style={{ background: ac }} />
          <span className="h-full w-px bg-[#ddd]" />
          <span className="w-[71px] text-right text-[14px] font-bold text-[#00c000]">{b}</span>
          <span className="ml-[2px] h-[12px] w-[12px]" style={{ background: bc }} />
        </div>
      ))}
    </div>
    <div className="h-[86px] pt-[3px] text-[16px] text-[#444]">
      {[
        { l: "净特大单", v: 26778, w: "w-[81px]" },
        { l: "净大单", v: 6765, w: "w-[21px]" },
        { l: "净中单", v: -22101, w: "w-[67px]" },
        { l: "净小单", v: -11442, w: "w-[35px]" },
      ].map(({ l, v, w }) => (
        <div key={l} className="flex h-[20px] items-center">
          <div className="flex h-full w-[155px] items-center justify-end">
            <span className="mr-auto">{l}</span>
            {v > 0 ? (
              <div className={`h-[17px] bg-gradient-to-b from-[#b81c10] to-[#f44a30] ${w}`} />
            ) : (
              <span className="pr-[3px] text-[14px] font-bold text-[#00c000]">{v}</span>
            )}
          </div>
          <div className="flex h-full flex-1 items-center border-l border-[#ddd]">
            {v > 0 ? (
              <span className="pl-[3px] text-[14px] font-bold text-[#c00000]">{v}</span>
            ) : (
              <div className={`h-[17px] bg-gradient-to-b from-[#108a08] to-[#50d000] ${w}`} />
            )}
          </div>
        </div>
      ))}
    </div>
    <div className="flex h-[20px] items-center border-t border-[#888] bg-[#e8e8e8] text-[16px] text-[#444]">
      <span className="w-[80px] pl-px">时间</span>
      <span className="w-[87px]">总排名</span>
      <span>大单净比</span>
    </div>
    <div className="h-[23px] overflow-hidden text-[15px] text-[#333]">
      {[["今日", "116", "1.45%"], ["3日", "100", "1.14%"]].map(([a, b, c]) => (
        <div key={a} className="flex h-[20px] items-center">
          <span className="w-[85px] pl-px">{a}</span>
          <span className="w-[24px]">第</span>
          <span className="w-[23px] text-[14px] font-bold text-[#000080]">{b}</span>
          <span className="w-[56px]">名</span>
          <span className="text-[14px] font-bold text-[#c00000]">{c}</span>
        </div>
      ))}
    </div>
    <div className="flex h-[18px] border-t border-black pl-px text-[12px]">
      <span className="flex w-[26px] items-center justify-center border-2 border-black bg-black text-white">细</span>
      <span className="flex w-[26px] items-center justify-center border-y border-r border-[#666]">分</span>
      <span className="flex w-[26px] items-center justify-center border-y border-r border-[#666]">筹</span>
      <span className="flex w-[26px] items-center justify-center border-y border-r border-[#666]">焰</span>
    </div>
  </div>
);

const tickers = [
  { n: "沪", p: "3605.58", c: "-1.98", a: "2801", col: GREEN, box: "w-[272px]", pw: "w-[86px]", cw: "w-[72px]", aw: "w-[76px]" },
  { n: "深", p: "15150.95", c: "+147.10", a: "3400", col: RED, box: "w-[274px]", pw: "w-[90px]", cw: "w-[81px]", aw: "w-[82px]" },
  { n: "中", p: "9902.19", c: "+89.25", a: "585", col: RED, box: "w-[272px]", pw: "w-[85px]", cw: "w-[81px]", aw: "w-[81px]" },
  { n: "创", p: "3418.17", c: "+70.47", a: "1379", col: RED, box: "w-[273px]", pw: "w-[87px]", cw: "w-[80px]", aw: "w-[86px]" },
  { n: "科", p: "1568.33", c: "+33.48", a: "352", col: RED, box: "w-[275px]", pw: "w-[87px]", cw: "w-[80px]", aw: "w-[83px]" },
];

const TickerBar = () => (
  <div className="flex h-[18px] shrink-0 border-t border-[#666] text-[14px] leading-none">
    {tickers.map((t) => (
      <div key={t.n} className={`flex items-center border-r border-[#666] pl-[2px] last:border-r-0 ${t.box}`}>
        <span className={`flex items-center justify-between font-bold ${t.pw}`} style={{ color: t.col }}>
          <span className="text-[16px] font-normal text-black">{t.n}</span>
          {t.p}
        </span>
        <span className={`text-right font-bold ${t.cw}`} style={{ color: t.col }}>{t.c}</span>
        <span className={`flex items-center justify-end font-bold text-[#128a96] ${t.aw}`}>
          {t.a}
          <span className="text-[17px] font-normal">亿</span>
        </span>
      </div>
    ))}
  </div>
);

const bottomLinks = [
  ["微信", "w-[31px]"], ["手机端", "w-[45px]"], ["反馈", "w-[31px]"], ["解盘", "w-[32px]"], ["日记", "w-[32px]"], ["股灵通", "w-[44px]"], ["行情", "w-[33px]"], ["7*24快讯", "w-[56px]"],
];

const BottomBar = () => (
  <div className="flex h-[17px] shrink-0 border-t-2 border-[#888] text-[12px] leading-none text-[#444]">
    {bottomLinks.map(([label, w]) => (
      <div key={label} className={`flex items-center justify-center border-r border-[#888] whitespace-nowrap ${w} ${label === "行情" ? "text-black" : ""}`}>
        {label}
      </div>
    ))}
    <div className="flex w-[33px] items-center justify-center border-r border-[#888]">
      <svg width="16" height="14" viewBox="0 0 16 14">
        <rect x="1" y="4" width="14" height="10" rx="5" fill="#c4c4c4" />
        <rect x="7" y="0" width="2" height="4" fill="#c4c4c4" />
        <circle cx="5" cy="8" r="1" fill="#fff" />
        <circle cx="11" cy="8" r="1" fill="#fff" />
      </svg>
    </div>
    <div className="flex flex-1 items-center justify-end pr-[1px] text-[#2020d0]">1</div>
    <div className="flex w-[215px] items-center justify-between bg-[#b0b0b0] pr-[5px] pl-[5px] text-black">
      代码/名称/简拼/功能
      <svg width="12" height="12" viewBox="0 0 12 12" fill="none">
        <circle cx="4.5" cy="4.5" r="3.5" stroke="#666" strokeWidth="1.5" />
        <path d="M7 7l4 4" stroke="#666" strokeWidth="2" />
      </svg>
    </div>
    <div className="flex w-[63px] items-center justify-center border-l-2 border-[#555] text-[14px] font-bold text-black">11:33:24</div>
  </div>
);

export default function App() {
  return (
    <div className="flex h-[707px] w-[1366px] flex-col overflow-hidden bg-white [font-family:'Liberation_Sans','Noto_Sans_CJK_SC',sans-serif]">
      <Toolbar />
      <div className="flex h-[621px] shrink-0">
        <LeftNav />
        <div className="w-[1106px] shrink-0">
          <div className="h-[585px] border-l-2 border-black">
            <PeriodTabs />
            <MainChart />
            <VolumeChart />
            <VolumeTabs />
            <div className="relative">
              <MacdChart />
              <div className="absolute top-0 left-[985px] flex h-[20px] w-[67px] items-center justify-center border-b border-l border-black bg-white text-[12px] leading-none">
                指标说明
              </div>
            </div>
          </div>
          <TimeAxis />
          <IndicatorTabs />
        </div>
        <RightPanel />
      </div>
      <TickerBar />
      <BottomBar />
    </div>
  );
}
